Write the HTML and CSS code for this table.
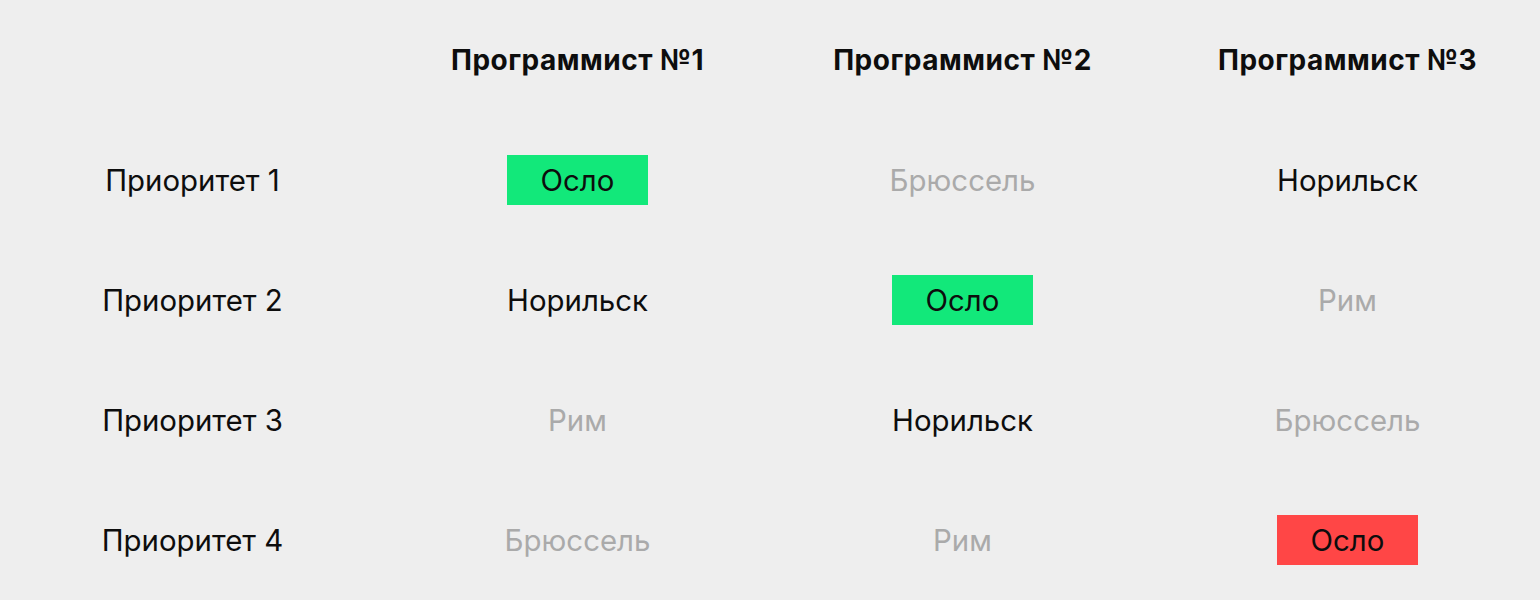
FILE: index.html
```html
<!DOCTYPE html>
<html lang="ru">
<head>
<meta charset="utf-8">
<link rel="stylesheet" href="styles.css">
</head>
<body>
<div class="table">
  <div class="cell"></div>
  <div class="cell head">Программист №1</div>
  <div class="cell head">Программист №2</div>
  <div class="cell head">Программист №3</div>

  <div class="cell label">Приоритет 1</div>
  <div class="cell"><span class="tag ok">Осло</span></div>
  <div class="cell muted">Брюссель</div>
  <div class="cell">Норильск</div>

  <div class="cell label">Приоритет 2</div>
  <div class="cell">Норильск</div>
  <div class="cell"><span class="tag ok">Осло</span></div>
  <div class="cell muted">Рим</div>

  <div class="cell label">Приоритет 3</div>
  <div class="cell muted">Рим</div>
  <div class="cell">Норильск</div>
  <div class="cell muted">Брюссель</div>

  <div class="cell label">Приоритет 4</div>
  <div class="cell muted">Брюссель</div>
  <div class="cell muted">Рим</div>
  <div class="cell"><span class="tag bad">Осло</span></div>
</div>
</body>
</html>
```
FILE: styles.css
```css
html, body {
  margin: 0;
  padding: 0;
  background: #eeeeee;
}
body {
  font-family: Inter, "Noto Sans", "Liberation Sans", sans-serif;
  font-size: 29.4px;
  color: #0d0d0d;
}
.table {
  display: grid;
  grid-template-columns: repeat(4, 385px);
  grid-template-rows: repeat(5, 120px);
  width: 1540px;
  height: 600px;
}
.cell {
  display: flex;
  align-items: center;
  justify-content: center;
  white-space: nowrap;
}
.head {
  font-size: 28px;
  font-weight: 700;
  letter-spacing: 0.5px;
}
.muted {
  color: #aaaaaa;
}
.tag {
  display: flex;
  align-items: center;
  justify-content: center;
  width: 141px;
  height: 50px;
}
.ok {
  background: #12e87a;
}
.bad {
  background: #ff4646;
}
```
